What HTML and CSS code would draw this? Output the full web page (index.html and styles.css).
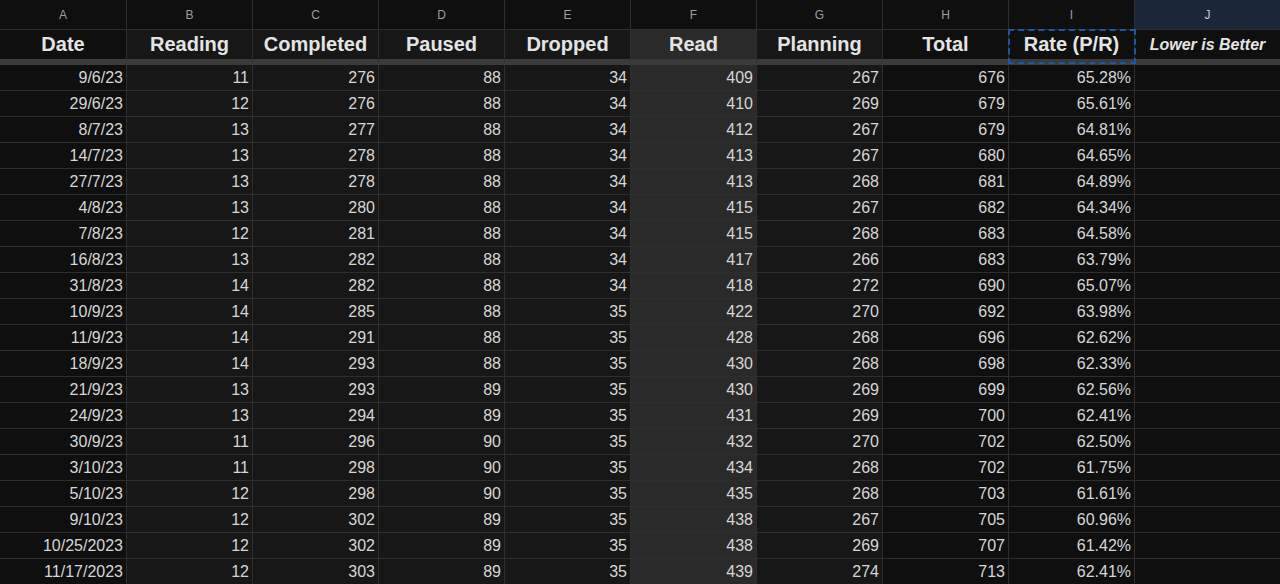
FILE: index.html
```html
<!DOCTYPE html>
<html lang="en">
<head>
  <meta charset="UTF-8">
  <meta name="viewport" content="width=device-width, initial-scale=1.0">
  <title>Reading Tracker</title>
  <link rel="stylesheet" href="styles.css">
</head>
<body>
  <div class="sheet" id="sheet">
    <div class="cell letter">A</div>
    <div class="cell letter">B</div>
    <div class="cell letter">C</div>
    <div class="cell letter">D</div>
    <div class="cell letter">E</div>
    <div class="cell letter">F</div>
    <div class="cell letter">G</div>
    <div class="cell letter">H</div>
    <div class="cell letter">I</div>
    <div class="cell letter active">J</div>

    <div class="cell head dark">Date</div>
    <div class="cell head mid">Reading</div>
    <div class="cell head mid">Completed</div>
    <div class="cell head mid">Paused</div>
    <div class="cell head mid">Dropped</div>
    <div class="cell head read">Read</div>
    <div class="cell head mid">Planning</div>
    <div class="cell head dark">Total</div>
    <div class="cell head dark selected">Rate (P/R)</div>
    <div class="cell head dark note">Lower is Better</div>
  </div>

  <script>
    const rows = [
      ["9/6/23", 11, 276, 88, 34, 409, 267, 676, "65.28%"],
      ["29/6/23", 12, 276, 88, 34, 410, 269, 679, "65.61%"],
      ["8/7/23", 13, 277, 88, 34, 412, 267, 679, "64.81%"],
      ["14/7/23", 13, 278, 88, 34, 413, 267, 680, "64.65%"],
      ["27/7/23", 13, 278, 88, 34, 413, 268, 681, "64.89%"],
      ["4/8/23", 13, 280, 88, 34, 415, 267, 682, "64.34%"],
      ["7/8/23", 12, 281, 88, 34, 415, 268, 683, "64.58%"],
      ["16/8/23", 13, 282, 88, 34, 417, 266, 683, "63.79%"],
      ["31/8/23", 14, 282, 88, 34, 418, 272, 690, "65.07%"],
      ["10/9/23", 14, 285, 88, 35, 422, 270, 692, "63.98%"],
      ["11/9/23", 14, 291, 88, 35, 428, 268, 696, "62.62%"],
      ["18/9/23", 14, 293, 88, 35, 430, 268, 698, "62.33%"],
      ["21/9/23", 13, 293, 89, 35, 430, 269, 699, "62.56%"],
      ["24/9/23", 13, 294, 89, 35, 431, 269, 700, "62.41%"],
      ["30/9/23", 11, 296, 90, 35, 432, 270, 702, "62.50%"],
      ["3/10/23", 11, 298, 90, 35, 434, 268, 702, "61.75%"],
      ["5/10/23", 12, 298, 90, 35, 435, 268, 703, "61.61%"],
      ["9/10/23", 12, 302, 89, 35, 438, 267, 705, "60.96%"],
      ["10/25/2023", 12, 302, 89, 35, 438, 269, 707, "61.42%"],
      ["11/17/2023", 12, 303, 89, 35, 439, 274, 713, "62.41%"]
    ];
    // background tone for each column A..J
    const tones = ["dark", "mid", "mid", "mid", "mid", "read", "mid", "dark", "dark", "dark"];

    let sheet = document.getElementById("sheet");
    let html = "";
    rows.forEach(row => {
      tones.forEach((tone, i) => {
        let value = i < row.length ? row[i] : "";
        html += `<div class="cell ${tone}">${value}</div>`;
      });
    });
    sheet.innerHTML += html;
  </script>
</body>
</html>
```

FILE: styles.css
```css
* { margin: 0; padding: 0; box-sizing: border-box; }
body { font-family: "Liberation Sans", Arial, sans-serif; background-color: #0f0f0f; color: #d6d6d6; overflow: hidden; }
.sheet { display: grid; grid-template-columns: 127px repeat(8, 126px) 1fr; grid-template-rows: 30px 35px; grid-auto-rows: 26px; }
.cell { border-right: 1px solid #2e2e2e; border-bottom: 1px solid #2e2e2e; font-size: 16px; line-height: 26px; text-align: right; padding: 0 3px; white-space: nowrap; overflow: hidden; }
.cell:nth-child(10n) { border-right: none; }
.letter { background-color: #0f0f0f; color: #9a9da2; font-size: 12px; line-height: 30px; text-align: center; }
.letter.active { background-color: #1b2638; color: #c3cad6; }
.head { font-size: 20px; font-weight: bold; color: #e4e4e4; text-align: center; line-height: 29px; border-bottom: 6px solid #3b3b3b; overflow: visible; }
.head.note { font-size: 16px; font-style: italic; }
.head.selected { position: relative; }
.head.selected::after { content: ""; position: absolute; top: -1px; left: -1px; right: -2px; height: 31px; border: 2px dashed #1d56a5; }
.dark { background-color: #0f0f0f; }
.mid { background-color: #171717; }
.read { background-color: #2a2a2a; }
```
